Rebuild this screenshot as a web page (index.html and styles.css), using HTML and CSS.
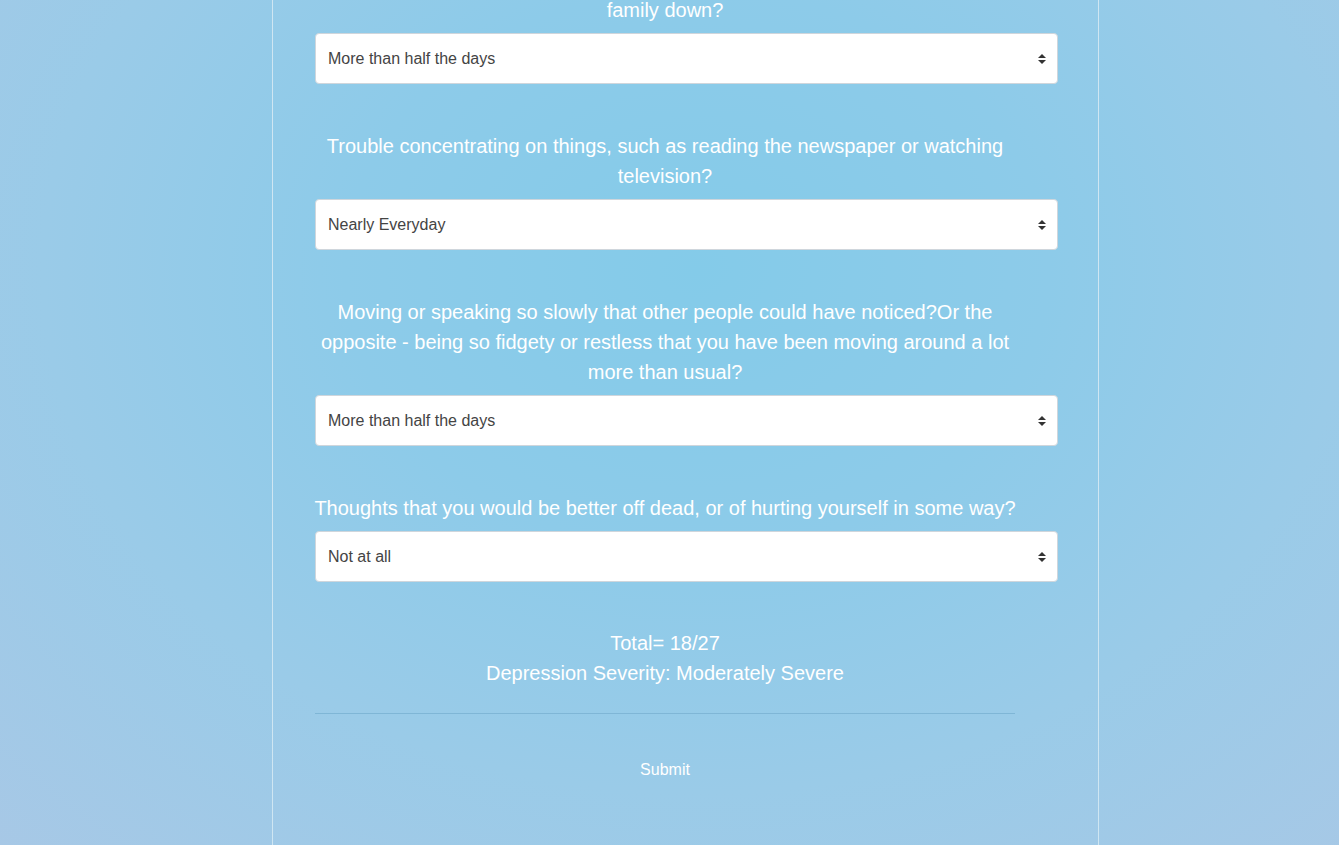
FILE: index.html
```html
<!DOCTYPE html>
<html lang="en">
<head>
<meta charset="utf-8">
<title>PHQ-9</title>
<link rel="stylesheet" href="styles.css">
</head>
<body>
<div class="page">
  <div class="panel">
    <form class="column">
      <div class="question first">
        <label class="q-label">family down?</label>
        <div class="select-wrap">
          <select class="answer"><option>More than half the days</option></select>
          <svg class="caret" width="10" height="12" viewBox="0 0 10 12"><path d="M1 5 L5 1 L9 5 Z M1 7 L5 11 L9 7 Z" fill="#333"/></svg>
        </div>
      </div>
      <div class="question">
        <label class="q-label">Trouble concentrating on things, such as reading the newspaper or watching television?</label>
        <div class="select-wrap">
          <select class="answer"><option>Nearly Everyday</option></select>
          <svg class="caret" width="10" height="12" viewBox="0 0 10 12"><path d="M1 5 L5 1 L9 5 Z M1 7 L5 11 L9 7 Z" fill="#333"/></svg>
        </div>
      </div>
      <div class="question">
        <label class="q-label">Moving or speaking so slowly that other people could have noticed?Or the opposite - being so fidgety or restless that you have been moving around a lot more than usual?</label>
        <div class="select-wrap">
          <select class="answer"><option>More than half the days</option></select>
          <svg class="caret" width="10" height="12" viewBox="0 0 10 12"><path d="M1 5 L5 1 L9 5 Z M1 7 L5 11 L9 7 Z" fill="#333"/></svg>
        </div>
      </div>
      <div class="question">
        <label class="q-label">Thoughts that you would be better off dead, or of hurting yourself in some way?</label>
        <div class="select-wrap">
          <select class="answer"><option>Not at all</option></select>
          <svg class="caret" width="10" height="12" viewBox="0 0 10 12"><path d="M1 5 L5 1 L9 5 Z M1 7 L5 11 L9 7 Z" fill="#333"/></svg>
        </div>
      </div>
      <div class="result">
        <div>Total= 18/27</div>
        <div>Depression Severity: Moderately Severe</div>
      </div>
      <hr class="divider">
      <button type="button" class="submit">Submit</button>
    </form>
  </div>
</div>
</body>
</html>
```

FILE: styles.css
```css
html, body {
  margin: 0;
  padding: 0;
  height: 100%;
}
body {
  font-family: "Liberation Sans", Arial, sans-serif;
  background: radial-gradient(ellipse 75% 95% at 52% 32%, #84cbe9 0%, #8dcbe9 35%, #9acbe8 65%, #a7c8e6 100%);
  overflow: hidden;
  color: #fff;
}
.page {
  height: 845px;
  display: flex;
  justify-content: flex-start;
}
.panel {
  margin-left: 272px;
  width: 783px;
  border-left: 1px solid #cfe6f2;
  border-right: 1px solid #cfe6f2;
  height: 845px;
  padding-left: 42px;
  box-sizing: content-box;
}
.column {
  width: 700px;
  margin-top: -5px;
  display: flex;
  flex-direction: column;
}
.question {
  display: flex;
  flex-direction: column;
  margin-bottom: 47px;
}
.q-label {
  display: block;
  font-size: 20px;
  line-height: 30px;
  text-align: center;
  margin: 0 -4px 8px -4px;
  color: #fff;
}
.select-wrap {
  position: relative;
  width: 743px;
  height: 51px;
}
.answer {
  appearance: none;
  -webkit-appearance: none;
  width: 743px;
  height: 51px;
  box-sizing: border-box;
  border: 1px solid #cfd6dc;
  border-radius: 4px;
  background: #fff;
  padding: 0 12px;
  font-family: "Liberation Sans", Arial, sans-serif;
  font-size: 16px;
  color: #444;
}
.caret {
  position: absolute;
  right: 11px;
  top: 20px;
  pointer-events: none;
}
.result {
  text-align: center;
  font-size: 20px;
  line-height: 30px;
  margin-top: -1px;
}
.divider {
  width: 700px;
  margin: 25px 0 0 0;
  border: 0;
  border-top: 1px solid #7fb6d6;
  height: 0;
}
.submit {
  align-self: center;
  margin-top: 46px;
  background: transparent;
  border: 0;
  color: #fff;
  font-family: "Liberation Sans", Arial, sans-serif;
  font-size: 16px;
  padding: 0;
  line-height: 20px;
}
```
